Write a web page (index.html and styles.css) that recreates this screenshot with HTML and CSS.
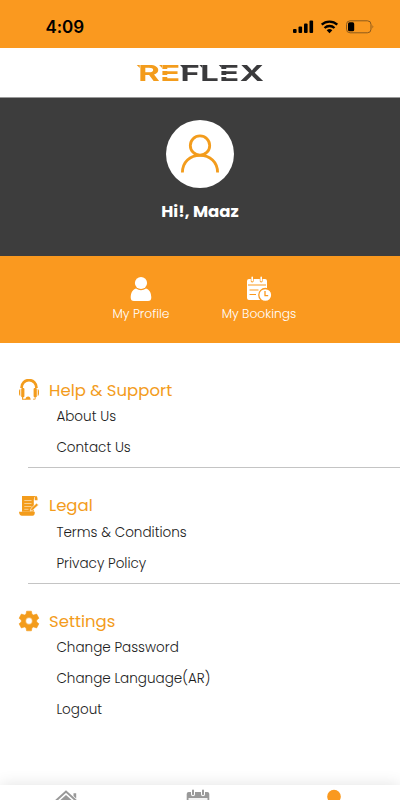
FILE: index.html
```html
<!DOCTYPE html>
<html lang="en">
<head>
    <meta charset="UTF-8">
    <meta name="viewport" content="width=device-width, initial-scale=1">
    <title>Reflex</title>
    <link rel="stylesheet" href="styles.css">
</head>
<body>
    <div class="status">
        <span class="time">4:09</span>
        <svg class="status-icons" width="82" height="14" viewBox="0 0 82 14">
            <rect x="0" y="9" width="3.6" height="4" rx="1"/>
            <rect x="5.5" y="6.5" width="3.6" height="6.5" rx="1"/>
            <rect x="11" y="3.5" width="3.6" height="9.5" rx="1"/>
            <rect x="16.5" y="0.5" width="3.6" height="12.5" rx="1"/>
            <g fill="none" stroke="#000" stroke-width="2.3">
                <path d="M28.7 4.7a11.2 11.2 0 0 1 15.6 0"/>
                <path d="M31.5 8a7.2 7.2 0 0 1 10 0"/>
            </g>
            <path d="M33.7 10.3a4.2 4.2 0 0 1 5.6 0l-2.8 2.9z"/>
            <rect x="53.5" y="0.8" width="24.5" height="12" rx="3.6" fill="none" stroke="#8c5a1c"/>
            <rect x="55" y="2.3" width="6.2" height="9" rx="1.6"/>
            <path d="M79.5 5v3.6q1.8-1.8 0-3.6z" fill="#8c5a1c"/>
        </svg>
    </div>
    <header class="header">
        <div class="logo"><span class="gold"><span class="wedge">R</span><span class="wedge"><span class="stencil">E</span></span></span><span class="wedge">F</span><span class="wedge">L</span><span class="wedge"><span class="stencil">E</span></span>X</div>
    </header>
    <div class="user">
        <div class="avatar">
            <svg width="40" height="40" viewBox="0 0 40 40" fill="none" stroke="#f39c1c" stroke-width="2.8">
                <circle cx="20" cy="11.5" r="9.7"/>
                <path d="M2.4 38.6C2.4 28 10 21.3 20 21.3S37.6 28 37.6 38.6"/>
            </svg>
        </div>
        <h1 class="hello">Hi!, Maaz</h1>
    </div>
    <div class="shortcuts">
        <a class="shortcut">
            <svg width="26" height="26" viewBox="0 0 26 26" fill="#fff">
                <circle cx="13" cy="7" r="6.1"/>
                <path d="M8 12.4Q13 16 18 12.4C21.6 13.6 23.3 17 23.3 21.5Q23.3 25 20 25H6Q2.7 25 2.7 21.5C2.7 17 4.4 13.6 8 12.4z"/>
            </svg>
            <span>My Profile</span>
        </a>
        <a class="shortcut">
            <svg width="26" height="26" viewBox="0 0 26 26" fill="#fff">
                <path d="M1 5Q1 3 3 3H4.8V5.5Q6.2 7.5 7.6 5.5V3H13.8V5.5Q15.2 7.5 16.6 5.5V3H19Q21 3 21 5V24H3Q1 24 1 22z"/>
                <path d="M6.2 1.2V4.8M15.2 1.2V4.8" stroke="#fff" stroke-width="1.6" stroke-linecap="round"/>
                <path d="M2 9H20M3.5 14H12.5M3.5 18.5H10" stroke="#fa991f" stroke-width="1.2"/>
                <circle cx="19.3" cy="19" r="6.5" stroke="#fa991f" stroke-width="1.3"/>
                <path d="M19 15V19.7H22.2" fill="none" stroke="#fa991f" stroke-width="1.3"/>
            </svg>
            <span>My Bookings</span>
        </a>
    </div>
    <main class="menu">
        <section class="group">
            <h2 class="group-title">
                <svg width="22" height="22" viewBox="0 0 22 22" fill="#f39c1c">
                    <path d="M3.6 9V8.5a7.4 7.4 0 0 1 14.8 0V9" fill="none" stroke="#f39c1c" stroke-width="2.7"/>
                    <rect x="3.2" y="9" width="3.2" height="9.2" rx="1"/>
                    <rect x="15.6" y="9" width="3.2" height="9.2" rx="1"/>
                    <path d="M2.3 10V17Q1 16.5 1 14.8V12Q1 10.5 2.3 10zM19.7 10V17Q21 16.5 21 14.8V12Q21 10.5 19.7 10z"/>
                    <path d="M4.6 17V20.2H8" fill="none" stroke="#f39c1c" stroke-width="1.1"/>
                    <path d="M7.5 20.7Q7.5 17.6 10.2 17.6Q12.3 17.6 12.7 20.7z"/>
                    <path d="M17.2 18V20.2H15" fill="none" stroke="#f39c1c" stroke-width="0.8"/>
                </svg>
                <span>Help &amp; Support</span>
            </h2>
            <ul>
                <li>About Us</li>
                <li>Contact Us</li>
            </ul>
        </section>
        <section class="group">
            <h2 class="group-title">
                <svg width="22" height="22" viewBox="0 0 22 22" fill="#f39c1c">
                    <path d="M4 1H17.5Q15.8 2 15.8 5V16.8H4z"/>
                    <path d="M16.8 5.3Q16.3 1 18 1Q19.6 1 19.6 5.3z"/>
                    <path d="M1 16.8H13V20.8H4Q1.3 20.8 1 16.8zM12.5 16.8H16.8Q17 20.8 14.5 20.8H12.5z"/>
                    <path d="M6.3 5.5H13.5M6.3 8.5H13.5M6.3 11.5H13.5M6.3 14.3H10.5" stroke="#fbd59a" stroke-width="0.9"/>
                    <path d="M12.2 16L13 13.3L18.5 8.2L20.5 10L14.8 15.2z" stroke="#fff" stroke-width="0.6"/>
                </svg>
                <span>Legal</span>
            </h2>
            <ul>
                <li>Terms &amp; Conditions</li>
                <li>Privacy Policy</li>
            </ul>
        </section>
        <section class="group">
            <h2 class="group-title">
                <svg width="22" height="22" viewBox="0 0 22 22">
                    <path fill="#f39c1c" fill-rule="evenodd" d="M8.6 1.2H13.4L14 4.2L15.6 5.1L18.6 4L20.9 8.2L18.7 10.1V11.9L20.9 13.8L18.6 18L15.6 16.9L14 17.8L13.4 20.8H8.6L8 17.8L6.4 16.9L3.4 18L1.1 13.8L3.3 11.9V10.1L1.1 8.2L3.4 4L6.4 5.1L8 4.2zM11 7.6A3.4 3.4 0 1 0 11 14.4A3.4 3.4 0 1 0 11 7.6z" stroke="#f39c1c" stroke-width="0.6" stroke-linejoin="round"/>
                </svg>
                <span>Settings</span>
            </h2>
            <ul>
                <li>Change Password</li>
                <li>Change Language(AR)</li>
                <li>Logout</li>
            </ul>
        </section>
    </main>
    <nav class="tabbar">
        <svg width="24" height="24" viewBox="0 0 24 24" fill="#999">
            <path d="M1 12.5L12 2.5L23 12.5" fill="none" stroke="#999" stroke-width="2"/>
            <path d="M12 6L21 14V23H3V14zM19.5 4.2H22.2V9.5L19.5 7z"/>
        </svg>
        <svg class="calendar" width="24" height="24" viewBox="0 0 24 24">
            <path d="M.7 5Q.7 3 2.7 3H21.3Q23.3 3 23.3 5V22H.7z" fill="#999"/>
            <path d="M2.5 9H21.5V20H2.5z" fill="#f3f3f3"/>
            <path d="M7 1.5V5.3M17 1.5V5.3" stroke="#fff" stroke-width="4" stroke-linecap="round"/>
            <path d="M7 1.5V5.3M17 1.5V5.3" stroke="#999" stroke-width="2" stroke-linecap="round"/>
        </svg>
        <svg width="24" height="24" viewBox="0 0 24 24" fill="#fa991f">
            <circle cx="12" cy="7.6" r="6.8"/>
            <path d="M1 24Q1 16 7 15H17Q23 16 23 24z"/>
        </svg>
    </nav>
</body>
</html>
```

FILE: styles.css
```css
*{
    box-sizing: border-box;
    margin: 0;
    padding: 0;
}
body{
    width: 400px;
    height: 800px;
    overflow: hidden;
    display: flex;
    flex-direction: column;
    background-color: #fff;
    font-family: Poppins, Inter, sans-serif;
    color: #1c1c1c;
}
svg{
    display: block;
    flex-shrink: 0;
}
.status{
    height: 48px;
    padding: 6px 25px 0 45.5px;
    display: flex;
    justify-content: space-between;
    align-items: center;
    background-color: #fa991f;
}
.time{
    font-family: Inter, sans-serif;
    font-size: 17px;
    font-weight: 600;
    letter-spacing: -0.1px;
    color: #000;
}
.header{
    height: 50px;
    padding-left: 2px;
    border-bottom: 1px solid #999;
    display: flex;
    justify-content: center;
    align-items: center;
}
.logo{
    font-family: Inter, sans-serif;
    font-size: 22px;
    font-weight: 700;
    line-height: 26px;
    letter-spacing: 0.3px;
    color: #3a3a3c;
    transform: scaleX(1.49);
}
.gold{
    color: #f39c1c;
}
/* pointed top left corner of the letters */
.wedge{
    position: relative;
}
.wedge::before{
    content: "";
    position: absolute;
    left: -0.8px;
    top: 5.5px;
    border-top: 3px solid currentColor;
    border-left: 2.5px solid transparent;
}
/* cuts the stem of the E between its bars */
.stencil{
    color: transparent;
    background-image: linear-gradient(#3a3a3c 9px, transparent 9px 11px, #3a3a3c 11px 15px, transparent 15px 17px, #3a3a3c 17px);
    -webkit-background-clip: text;
    background-clip: text;
}
.gold .stencil{
    background-image: linear-gradient(#f39c1c 9px, transparent 9px 11px, #f39c1c 11px 15px, transparent 15px 17px, #f39c1c 17px);
}
.user{
    height: 158px;
    padding-top: 21.5px;
    display: flex;
    flex-direction: column;
    align-items: center;
    background-color: #3d3d3d;
}
.avatar{
    width: 68px;
    height: 68px;
    border-radius: 50%;
    display: flex;
    justify-content: center;
    align-items: center;
    background-color: #fff;
}
.hello{
    margin-top: 12.5px;
    font-size: 16.5px;
    font-weight: 700;
    line-height: 24px;
    color: #fff;
}
.shortcuts{
    height: 87px;
    padding-top: 20px;
    display: flex;
    justify-content: center;
    background-color: #fa991f;
}
.shortcut{
    width: 118px;
    display: flex;
    flex-direction: column;
    align-items: center;
    font-size: 12.3px;
    font-weight: 300;
    line-height: 20px;
    color: #fff;
}
.shortcut span{
    margin-top: 2px;
}
.menu{
    flex: 1;
    padding-top: 36px;
}
.group{
    margin-bottom: 26.5px;
}
.group-title{
    height: 22px;
    padding-left: 18px;
    display: flex;
    align-items: center;
    gap: 9px;
    font-size: 16.5px;
    font-weight: 400;
    line-height: 21px;
    color: #f39c1c;
}
.group ul{
    margin-left: 28px;
    padding: 0 0 4px 28.4px;
    list-style: none;
    border-bottom: 1px solid #c4c4c4;
}
.group:last-child ul{
    border-bottom: none;
}
.group li{
    height: 31px;
    line-height: 31px;
    font-size: 13.55px;
    font-weight: 300;
}
.tabbar{
    height: 15px;
    padding: 4px 54px 0;
    display: flex;
    justify-content: space-between;
    background-color: #fff;
    box-shadow: 0 0 16px rgba(0, 0, 0, 0.12);
}
.calendar{
    margin-right: 4px;
}
```
